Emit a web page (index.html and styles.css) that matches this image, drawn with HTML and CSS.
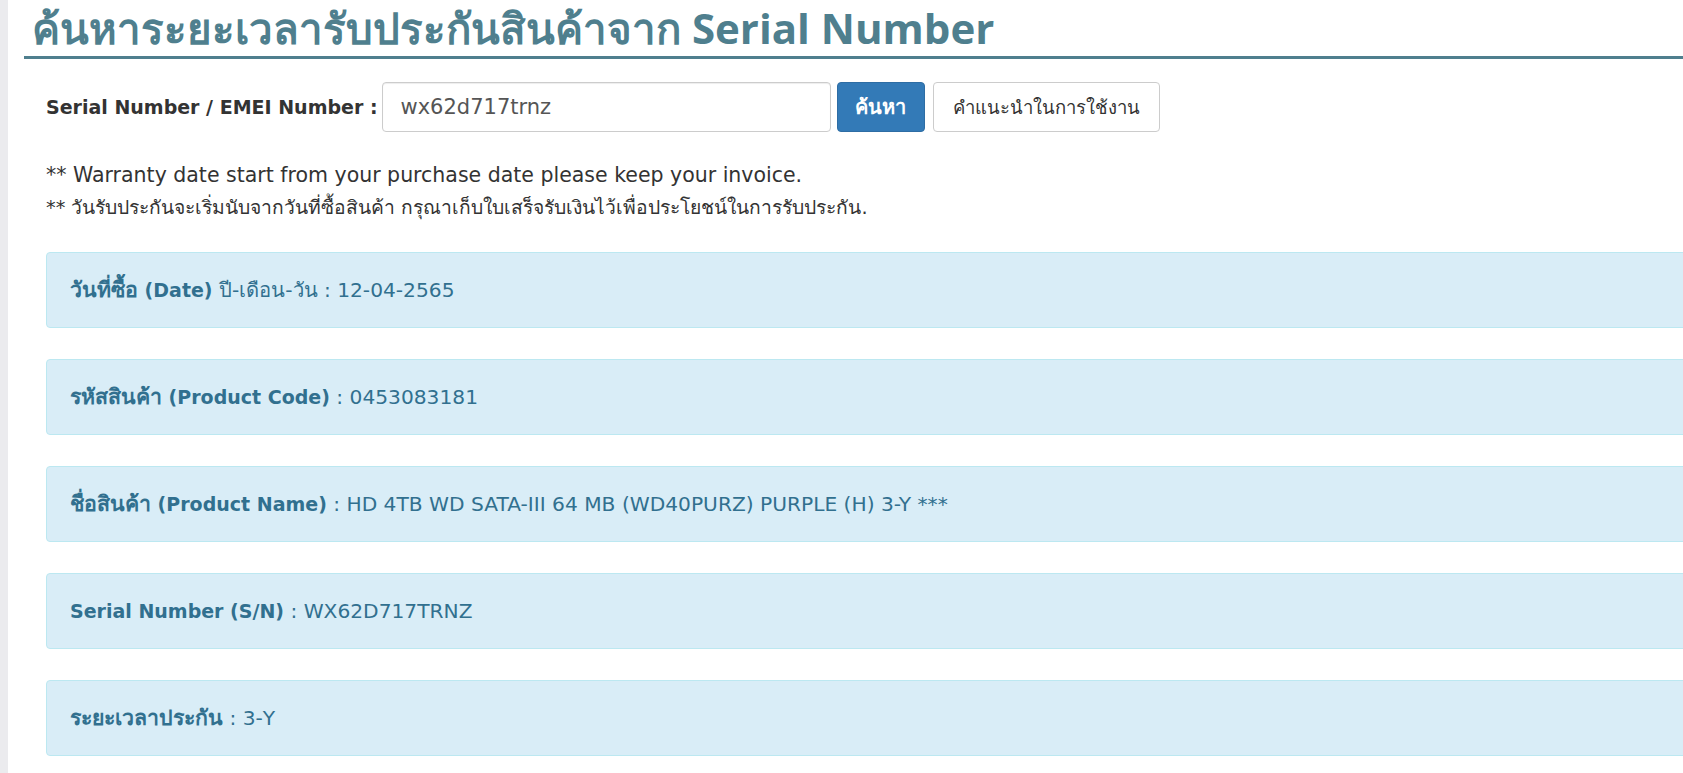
FILE: index.html
```html
<!DOCTYPE html>
<html lang="th">
<head>
<meta charset="utf-8">
<title>ค้นหาระยะเวลารับประกันสินค้าจาก Serial Number</title>
<link rel="stylesheet" href="styles.css">
</head>
<body>
<div class="side"></div>
<main class="main">
  <h1 class="title">ค้นหาระยะเวลารับประกันสินค้าจาก Serial Number</h1>
  <div class="content">
    <form class="search-row">
      <label class="search-label" for="sn">Serial Number / EMEI Number :</label>
      <input class="search-input" id="sn" type="text" value="wx62d717trnz">
      <button class="btn btn-primary" type="button">ค้นหา</button>
      <button class="btn btn-default" type="button">คำแนะนำในการใช้งาน</button>
    </form>
    <p class="note note-en">** Warranty date start from your purchase date please keep your invoice.</p>
    <p class="note note-th">** วันรับประกันจะเริ่มนับจากวันที่ซื้อสินค้า กรุณาเก็บใบเสร็จรับเงินไว้เพื่อประโยชน์ในการรับประกัน.</p>
    <div class="results">
      <div class="alert"><b><span class="th">วันที่ซื้อ</span> (Date)</b> ปี-เดือน-วัน : 12-04-2565</div>
      <div class="alert"><b><span class="th">รหัสสินค้า</span> (Product Code)</b> : 0453083181</div>
      <div class="alert"><b><span class="th">ชื่อสินค้า</span> (Product Name)</b> : HD 4TB WD SATA-III 64 MB (WD40PURZ) PURPLE (H) 3-Y ***</div>
      <div class="alert"><b>Serial Number (S/N)</b> : WX62D717TRNZ</div>
      <div class="alert"><b><span class="th">ระยะเวลาประกัน</span></b> : 3-Y</div>
    </div>
  </div>
</main>
</body>
</html>
```
FILE: styles.css
```css
html, body {
  margin: 0;
  height: 100%;
  overflow: hidden;
  background: #ffffff;
}
body {
  display: flex;
  font-family: "DejaVu Sans", "Open Sans", sans-serif;
  color: #333333;
}
.side {
  width: 8px;
  flex: none;
  background: #ebebee;
}
.main {
  flex: 1;
  min-width: 0;
  padding-left: 16px;
}
.title {
  margin: 0;
  padding-left: 8px;
  font-family: "Open Sans", sans-serif;
  font-size: 42px;
  font-weight: 700;
  line-height: 56px;
  height: 56px;
  color: #4f7f8e;
  border-bottom: 3px solid #4f7f8e;
  white-space: nowrap;
}
.content {
  padding-left: 22px;
  margin-right: -40px;
}
.search-row {
  display: flex;
  align-items: center;
  margin: 23px 0 0;
  height: 50px;
}
.search-label {
  font-weight: 700;
  font-size: 19px;
  margin-right: 4px;
  white-space: nowrap;
}
.search-input {
  box-sizing: border-box;
  width: 449px;
  height: 50px;
  padding: 0 18px;
  border: 1px solid #cccccc;
  border-radius: 4px;
  font-family: inherit;
  font-size: 21px;
  color: #555555;
  box-shadow: inset 0 1px 1px rgba(0,0,0,.075);
}
.btn {
  box-sizing: border-box;
  height: 50px;
  border-radius: 4px;
  font-family: inherit;
  font-size: 18.5px;
  padding: 0 8px;
}
.btn-primary {
  width: 88px;
  background: #337ab7;
  border: 1px solid #2e6da4;
  color: #ffffff;
  font-weight: 700;
  font-size: 20px;
  margin-left: 6px;
}
.btn-default {
  width: 227px;
  background: #ffffff;
  border: 1px solid #cccccc;
  color: #333333;
  margin-left: 8px;
}
.note {
  margin: 0;
  white-space: nowrap;
}
.note-en {
  margin-top: 29px;
  font-size: 20.5px;
  line-height: 29px;
}
.note-th {
  margin-top: 2px;
  font-size: 19.25px;
  line-height: 31px;
}
.results {
  margin-top: 29px;
}
.alert {
  box-sizing: border-box;
  height: 76px;
  padding: 24px 23px;
  margin-bottom: 31px;
  background: #d9edf7;
  border: 1px solid #bce8f1;
  border-radius: 4px;
  color: #31708f;
  font-size: 20.2px;
  line-height: 26px;
  white-space: nowrap;
}
.alert b {
  font-size: 19px;
  font-weight: 700;
}
.alert b .th {
  font-size: 21.3px;
}
```
